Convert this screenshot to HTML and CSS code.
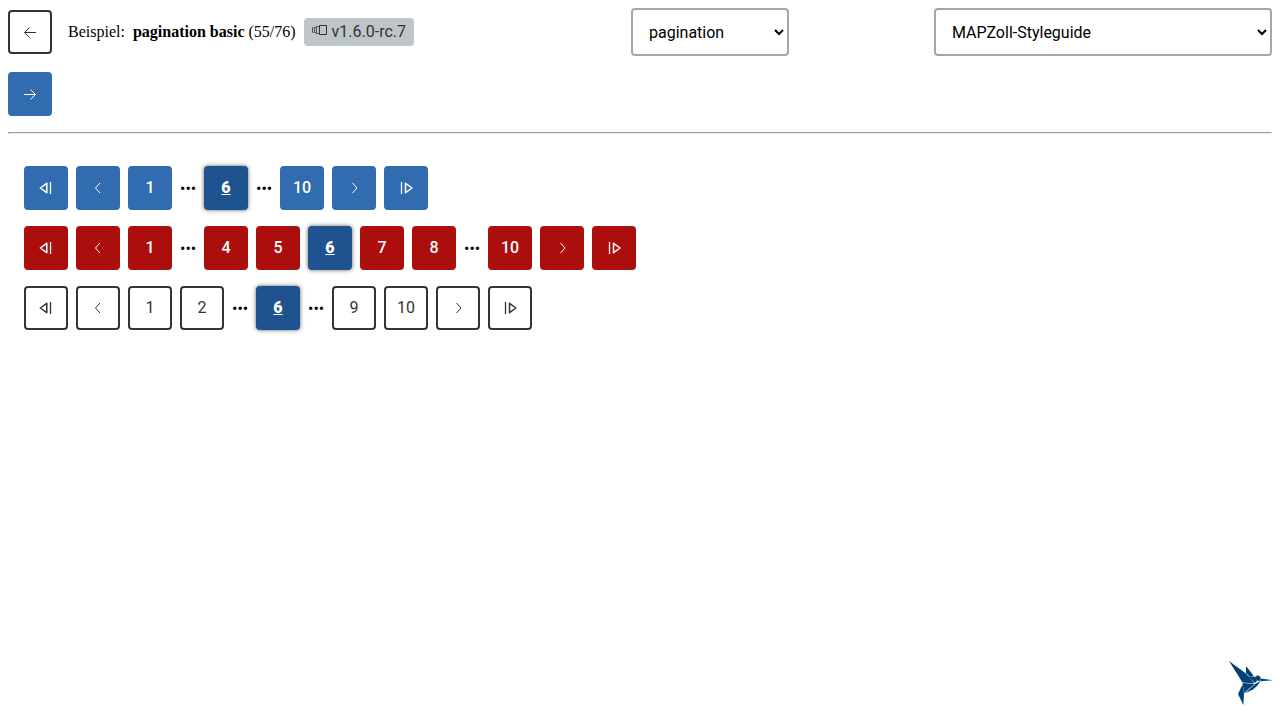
FILE: index.html
```html
<!DOCTYPE html>
<html lang="de">
<head>
<meta charset="utf-8">
<meta name="viewport" content="width=device-width, initial-scale=1">
<title>pagination basic</title>
<link rel="stylesheet" href="styles.css">
</head>
<body>
<svg class="sprite" aria-hidden="true">
  <symbol id="first" viewBox="0 0 16 16"><path d="M8.800 3.300v9.400L2.300 8z" stroke-width="1.500" stroke-linejoin="round"/><path d="M12.500 2v12" stroke-width="1.300"/></symbol>
  <symbol id="last" viewBox="0 0 16 16"><path d="M7.500 3.300v9.400L14 8z" stroke-width="1.500" stroke-linejoin="round"/><path d="M3.500 2v12" stroke-width="1.300"/></symbol>
  <symbol id="prev" viewBox="0 0 16 16"><path d="M10 3L5.500 8l4.500 5"/></symbol>
  <symbol id="next" viewBox="0 0 16 16"><path d="M6.500 3l4.500 5-4.500 5"/></symbol>
  <symbol id="left" viewBox="0 0 16 16"><path d="M14 8.500H2.500M7.500 3.500l-5 5 5 5"/></symbol>
  <symbol id="right" viewBox="0 0 16 16"><path d="M2 8.500h11.500M8.500 3.500l5 5-5 5"/></symbol>
</svg>
<header class="header">
  <div class="top">
    <div class="intro">
      <button class="btn secondary" aria-label="Zurück"><svg class="icon"><use href="#left"/></svg></button>
      <p class="example">Beispiel: <strong class="name">pagination basic</strong> (55/76)</p>
      <span class="badge"><svg class="versions" viewBox="0 0 16 16" aria-hidden="true"><path d="M7.500 2.500h7v9h-7z"/><path d="M7 3.500H4.500v7H7M4 4.500H2.500v5H4M1.500 4.500H.5v5h1" stroke-width=".8"/></svg>v1.6.0-rc.7</span>
    </div>
    <select class="select component" aria-label="Komponente"><option>pagination</option></select>
    <select class="select theme" aria-label="Theme"><option>MAPZoll-Styleguide</option></select>
  </div>
  <button class="btn primary" aria-label="Weiter"><svg class="icon"><use href="#right"/></svg></button>
</header>
<hr class="rule">
<main class="main">
  <nav class="pages" aria-label="Seiten, primär">
    <button class="btn primary" aria-label="Erste Seite"><svg class="icon"><use href="#first"/></svg></button>
    <button class="btn primary" aria-label="Vorherige Seite"><svg class="icon"><use href="#prev"/></svg></button>
    <button class="btn primary">1</button>
    <span class="dots">•••</span>
    <button class="btn current" aria-current="page">6</button>
    <span class="dots">•••</span>
    <button class="btn primary">10</button>
    <button class="btn primary" aria-label="Nächste Seite"><svg class="icon"><use href="#next"/></svg></button>
    <button class="btn primary" aria-label="Letzte Seite"><svg class="icon"><use href="#last"/></svg></button>
  </nav>
  <nav class="pages" aria-label="Seiten, Gefahr">
    <button class="btn danger" aria-label="Erste Seite"><svg class="icon"><use href="#first"/></svg></button>
    <button class="btn danger" aria-label="Vorherige Seite"><svg class="icon"><use href="#prev"/></svg></button>
    <button class="btn danger">1</button>
    <span class="dots">•••</span>
    <button class="btn danger">4</button>
    <button class="btn danger">5</button>
    <button class="btn current" aria-current="page">6</button>
    <button class="btn danger">7</button>
    <button class="btn danger">8</button>
    <span class="dots">•••</span>
    <button class="btn danger">10</button>
    <button class="btn danger" aria-label="Nächste Seite"><svg class="icon"><use href="#next"/></svg></button>
    <button class="btn danger" aria-label="Letzte Seite"><svg class="icon"><use href="#last"/></svg></button>
  </nav>
  <nav class="pages" aria-label="Seiten, sekundär">
    <button class="btn secondary" aria-label="Erste Seite"><svg class="icon"><use href="#first"/></svg></button>
    <button class="btn secondary" aria-label="Vorherige Seite"><svg class="icon"><use href="#prev"/></svg></button>
    <button class="btn secondary">1</button>
    <button class="btn secondary">2</button>
    <span class="dots">•••</span>
    <button class="btn current" aria-current="page">6</button>
    <span class="dots">•••</span>
    <button class="btn secondary">9</button>
    <button class="btn secondary">10</button>
    <button class="btn secondary" aria-label="Nächste Seite"><svg class="icon"><use href="#next"/></svg></button>
    <button class="btn secondary" aria-label="Letzte Seite"><svg class="icon"><use href="#last"/></svg></button>
  </nav>
</main>
<svg class="logo" viewBox="0 0 60 60" role="img" aria-label="KoliBri">
  <path d="M9 6L26 18.500 34.500 28.500 22.500 27.500z"/>
  <path d="M26 11L33.500 20.500 30 22 26 18z"/>
  <path d="M28 21.500L34 21.500 37.500 25 35 28z"/>
  <path d="M34.500 22L38 20.300 40.500 22 40.500 25.500 38 26z"/>
  <path d="M40.500 23.500L53 25.300 40.500 26.300z"/>
  <path d="M22.500 28L34.500 29 24 38z"/>
  <path d="M35.500 28.800L40.500 26 37.500 30.500 33 34.500 24.500 38.500z"/>
  <path d="M22.500 29.500L24 38.500 23.300 50 18 39z"/>
</svg>
</body>
</html>
```
FILE: styles.css
```css
* { box-sizing: border-box; }
body { margin: 8px; background: #fff; color: #000; font: 16px/20px "Liberation Serif", serif; }
.sprite { display: none; }
.header { display: grid; gap: 16px; }
.top { display: flex; align-items: center; }
.intro { display: flex; align-items: center; flex: 1; }
.example { margin: 0 8px 0 16px; white-space: nowrap; }
.name { margin-left: 4px; }
.badge {
  display: flex; align-items: center; height: 28px; padding: 0 8px;
  border-radius: 4px; background: #bec5c9; color: #333;
  font-family: Roboto, sans-serif; white-space: nowrap;
}
.versions { width: 16px; height: 16px; margin: 0 4px 2px 0; fill: none; stroke: currentColor; }
.select {
  height: 48px; padding: 0 0 0 12px; border: 2px solid #a6a6a6; border-radius: 4px;
  background: #fff; color: #000; font: 16px/20px Roboto, sans-serif;
}
.component { width: 158px; margin-right: 145px; }
.theme { width: 338px; }
.rule { margin: 16px 0; }
.main { display: grid; gap: 16px; padding: 16px; }
.pages { display: flex; flex-wrap: wrap; gap: 8px; align-items: center; }
.btn {
  display: flex; align-items: center; justify-content: center;
  width: 44px; height: 44px; padding: 0; border: 0; border-radius: 4px;
  color: #fff; font: 500 16px/20px Roboto, sans-serif;
}
.primary { background: #316cb0; }
.danger { background: #ac0d0d; }
.secondary { border: 2px solid #333; background: #fff; color: #333; font-weight: 400; }
.current { background: #1f538f; box-shadow: 0 0 4px #666; font-weight: 900; text-decoration: underline; }
.icon { width: 16px; height: 16px; fill: none; stroke: currentColor; }
.dots { width: 16px; padding-top: 1px; font-family: Roboto, sans-serif; text-align: center; }
.logo { position: fixed; right: 0; bottom: 5px; width: 60px; height: 60px; fill: #004278; }
```
